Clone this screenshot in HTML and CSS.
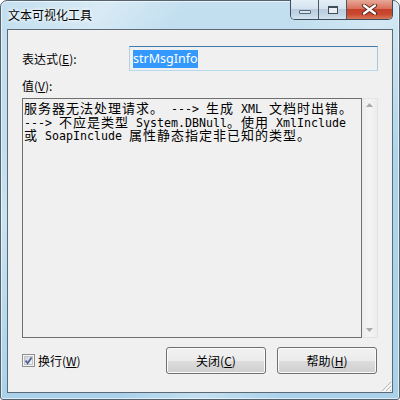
FILE: index.html
```html
<!DOCTYPE html>
<html>
<head>
<meta charset="utf-8">
<link rel="stylesheet" href="styles.css">
</head>
<body>
<div class="window">
  <div class="titlebar">
    <div class="title">文本可视化工具</div>
    <div class="caption">
      <div class="cbtn min"><span class="min-glyph"></span></div>
      <div class="cbtn max"><span class="max-glyph"></span></div>
      <div class="cbtn close">
        <svg class="x-glyph" width="17" height="11" viewBox="0 0 17 11">
          <path d="M3 1.5 L14 9.5 M14 1.5 L3 9.5" stroke="#5a2a20" stroke-width="4.2" stroke-linecap="round" fill="none"/>
          <path d="M3 1.5 L14 9.5 M14 1.5 L3 9.5" stroke="#ffffff" stroke-width="2.2" stroke-linecap="round" fill="none"/>
        </svg>
      </div>
    </div>
  </div>
  <div class="client">
    <div class="expr">
      <div class="lbl expr-lbl">表达式(<u>E</u>):</div>
      <div class="textbox"><span class="sel">strMsgInfo</span></div>
    </div>
    <div class="lbl val-lbl">值(<u>V</u>):</div>
    <div class="area">
      <div class="edit">
        <div class="ln"><span class="zh">服务器无法处理请求。</span><span class="en"> ---&gt; </span><span class="zh">生成</span><span class="en"> XML </span><span class="zh">文档时出错。</span></div>
        <div class="ln"><span class="en">---&gt; </span><span class="zh">不应是类型</span><span class="en"> System.DBNull</span><span class="zh">。使用</span><span class="en"> XmlInclude</span></div>
        <div class="ln"><span class="zh">或</span><span class="en"> SoapInclude </span><span class="zh">属性静态指定非已知的类型。</span></div>
      </div>
      <div class="vscroll">
        <svg width="7" height="4" viewBox="0 0 7 4"><polygon points="0,4 3.5,0 7,4" fill="#a9a9a9"/></svg>
        <svg width="7" height="4" viewBox="0 0 7 4"><polygon points="0,0 7,0 3.5,4" fill="#a9a9a9"/></svg>
      </div>
    </div>
    <div class="bottom">
      <svg class="chk" width="13" height="13" viewBox="0 0 13 13">
        <defs>
          <linearGradient id="cg" x1="0" y1="0" x2="1" y2="1">
            <stop offset="0" stop-color="#cbcfd5"/>
            <stop offset="1" stop-color="#f6f6f6"/>
          </linearGradient>
        </defs>
        <rect x="0.5" y="0.5" width="12" height="12" fill="#f4f4f4" stroke="#8e8f8f"/>
        <rect x="2.5" y="2.5" width="8" height="8" fill="url(#cg)" stroke="#c0c4ca"/>
        <path d="M3.6 6.6 L5.6 9.2 L9.6 3.4" stroke="#4a5f97" stroke-width="1.7" fill="none"/>
      </svg>
      <span class="lbl chk-lbl">换行(<u>W</u>)</span>
      <div class="buttons">
        <button class="btn">关闭(<u>C</u>)</button>
        <button class="btn">帮助(<u>H</u>)</button>
      </div>
    </div>
    <svg class="grip" width="12" height="12" viewBox="0 0 12 12">
      <path d="M11 2 L2 11 M11 6 L6 11 M11 10 L10 11" stroke="#b8b8b8" stroke-width="1" fill="none"/>
      <path d="M12 3 L3 12 M12 7 L7 12" stroke="#ffffff" stroke-width="1" fill="none"/>
    </svg>
  </div>
</div>
</body>
</html>
```
FILE: styles.css
```css
html, body {
  margin: 0;
  padding: 0;
}
body {
  width: 400px;
  height: 400px;
  overflow: hidden;
  font-family: "Noto Sans CJK SC", "Noto Sans", sans-serif;
  font-size: 12px;
  color: #000;
  background: #ffffff;
}
.window {
  box-sizing: border-box;
  width: 400px;
  height: 400px;
  border: 1px solid #55636f;
  border-radius: 7px 7px 3px 3px;
  padding: 0 6px 6px 6px;
  display: flex;
  flex-direction: column;
  background:
    linear-gradient(115deg, rgba(255,255,255,0) 0%, rgba(255,255,255,0.35) 18%, rgba(255,255,255,0) 32%, rgba(255,255,255,0) 52%, rgba(255,255,255,0.3) 66%, rgba(255,255,255,0) 80%),
    linear-gradient(180deg, #c4e0f0 0%, #acd4ea 40%, #a9d2ea 100%);
  box-shadow: inset 0 0 0 1px rgba(255,255,255,0.6);
}
.titlebar {
  flex: none;
  height: 28px;
  display: flex;
  align-items: flex-start;
}
.title {
  margin: 6px 0 0 1px;
  line-height: 16px;
  font-size: 12px;
  text-shadow: 0 0 5px #ffffff, 0 0 3px #ffffff;
}
.caption {
  margin-left: auto;
  margin-top: -1px;
  display: flex;
  height: 20px;
  box-sizing: border-box;
  border: 1px solid #3e4c59;
  border-top: none;
  border-radius: 0 0 5px 5px;
  overflow: hidden;
}
.cbtn {
  display: flex;
  justify-content: center;
  align-items: flex-start;
  box-sizing: border-box;
  height: 19px;
  background: linear-gradient(180deg, #e4eef6 0%, #d6e3ee 45%, #b9cddf 50%, #c4d7e7 80%, #d4e4f0 100%);
}
.cbtn + .cbtn {
  border-left: 1px solid #4a5866;
}
.min { width: 27px; }
.max { width: 28px; }
.close {
  width: 46px;
  background: linear-gradient(180deg, #e8a899 0%, #d9705c 45%, #c4402a 50%, #c9482f 75%, #d9775a 100%);
}
.min-glyph {
  margin-top: 10px;
  width: 12px;
  height: 4px;
  box-sizing: border-box;
  border: 1px solid #56667a;
  border-radius: 1px;
  background: #dde5ec;
}
.max-glyph {
  margin-top: 6px;
  width: 10px;
  height: 8px;
  box-sizing: border-box;
  border: 1px solid #3f4d5c;
  border-top-width: 2px;
  background: #e9eff4;
}
.x-glyph {
  margin-top: 4px;
}
.client {
  flex: 1;
  position: relative;
  background: #f0f0f0;
  border: 1px solid #5d6a76;
  display: flex;
  flex-direction: column;
  padding: 16px 14px 18px 14px;
}
.lbl {
  line-height: 16px;
  font-size: 12px;
}
u {
  text-decoration: underline;
  text-underline-offset: 1px;
}
.expr {
  display: flex;
  align-items: center;
  height: 25px;
}
.expr-lbl {
  width: 107px;
  flex: none;
}
.textbox {
  box-sizing: border-box;
  width: 250px;
  height: 25px;
  border: 1px solid;
  border-color: #3d7bad #a4c9e3 #b7d9ed #b5cfe7;
  background: #f0f0f0;
  padding: 2px 3px;
}
.sel {
  display: inline-block;
  background: #3399ff;
  color: #ffffff;
  font-family: "Noto Sans", sans-serif;
  font-size: 12.5px;
  line-height: 18px;
  height: 18px;
}
.val-lbl {
  margin-top: 7px;
}
.area {
  margin-top: 4px;
  height: 240px;
  display: flex;
}
.edit {
  width: 340px;
  box-sizing: border-box;
  border: 1px solid #707070;
  padding: 2px 0 0 1px;
  background: #f0f0f0;
}
.ln {
  height: 13.5px;
  line-height: 13.5px;
  white-space: pre;
}
.zh {
  font-family: "Noto Sans CJK SC", sans-serif;
  font-size: 13px;
  letter-spacing: 1px;
}
.en {
  font-family: "DejaVu Sans Mono", monospace;
  font-size: 11.63px;
}
.vscroll {
  width: 16px;
  box-sizing: border-box;
  border: 1px solid #e4e4e4;
  border-left: none;
  background: linear-gradient(90deg, #ececec 0%, #f4f4f4 50%, #ececec 100%);
  display: flex;
  flex-direction: column;
  justify-content: space-between;
  align-items: center;
  padding: 4px 0 5px 0;
}
.bottom {
  margin-top: 9px;
  height: 27px;
  display: flex;
  align-items: center;
}
.chk {
  flex: none;
}
.chk-lbl {
  margin-left: 3px;
}
.buttons {
  margin-left: auto;
  margin-right: 1px;
  display: flex;
  gap: 11px;
}
.btn {
  width: 100px;
  height: 27px;
  box-sizing: border-box;
  border: 1px solid #707070;
  border-radius: 3px;
  padding: 0;
  background: linear-gradient(180deg, #f2f2f2 0%, #ebebeb 50%, #dddddd 51%, #cfcfcf 100%);
  box-shadow: inset 0 0 0 1px #fbfbfb;
  font-family: "Noto Sans CJK SC", "Noto Sans", sans-serif;
  font-size: 12px;
  line-height: 16px;
  color: #000;
}
.grip {
  position: absolute;
  right: 0;
  bottom: 0;
}
```
